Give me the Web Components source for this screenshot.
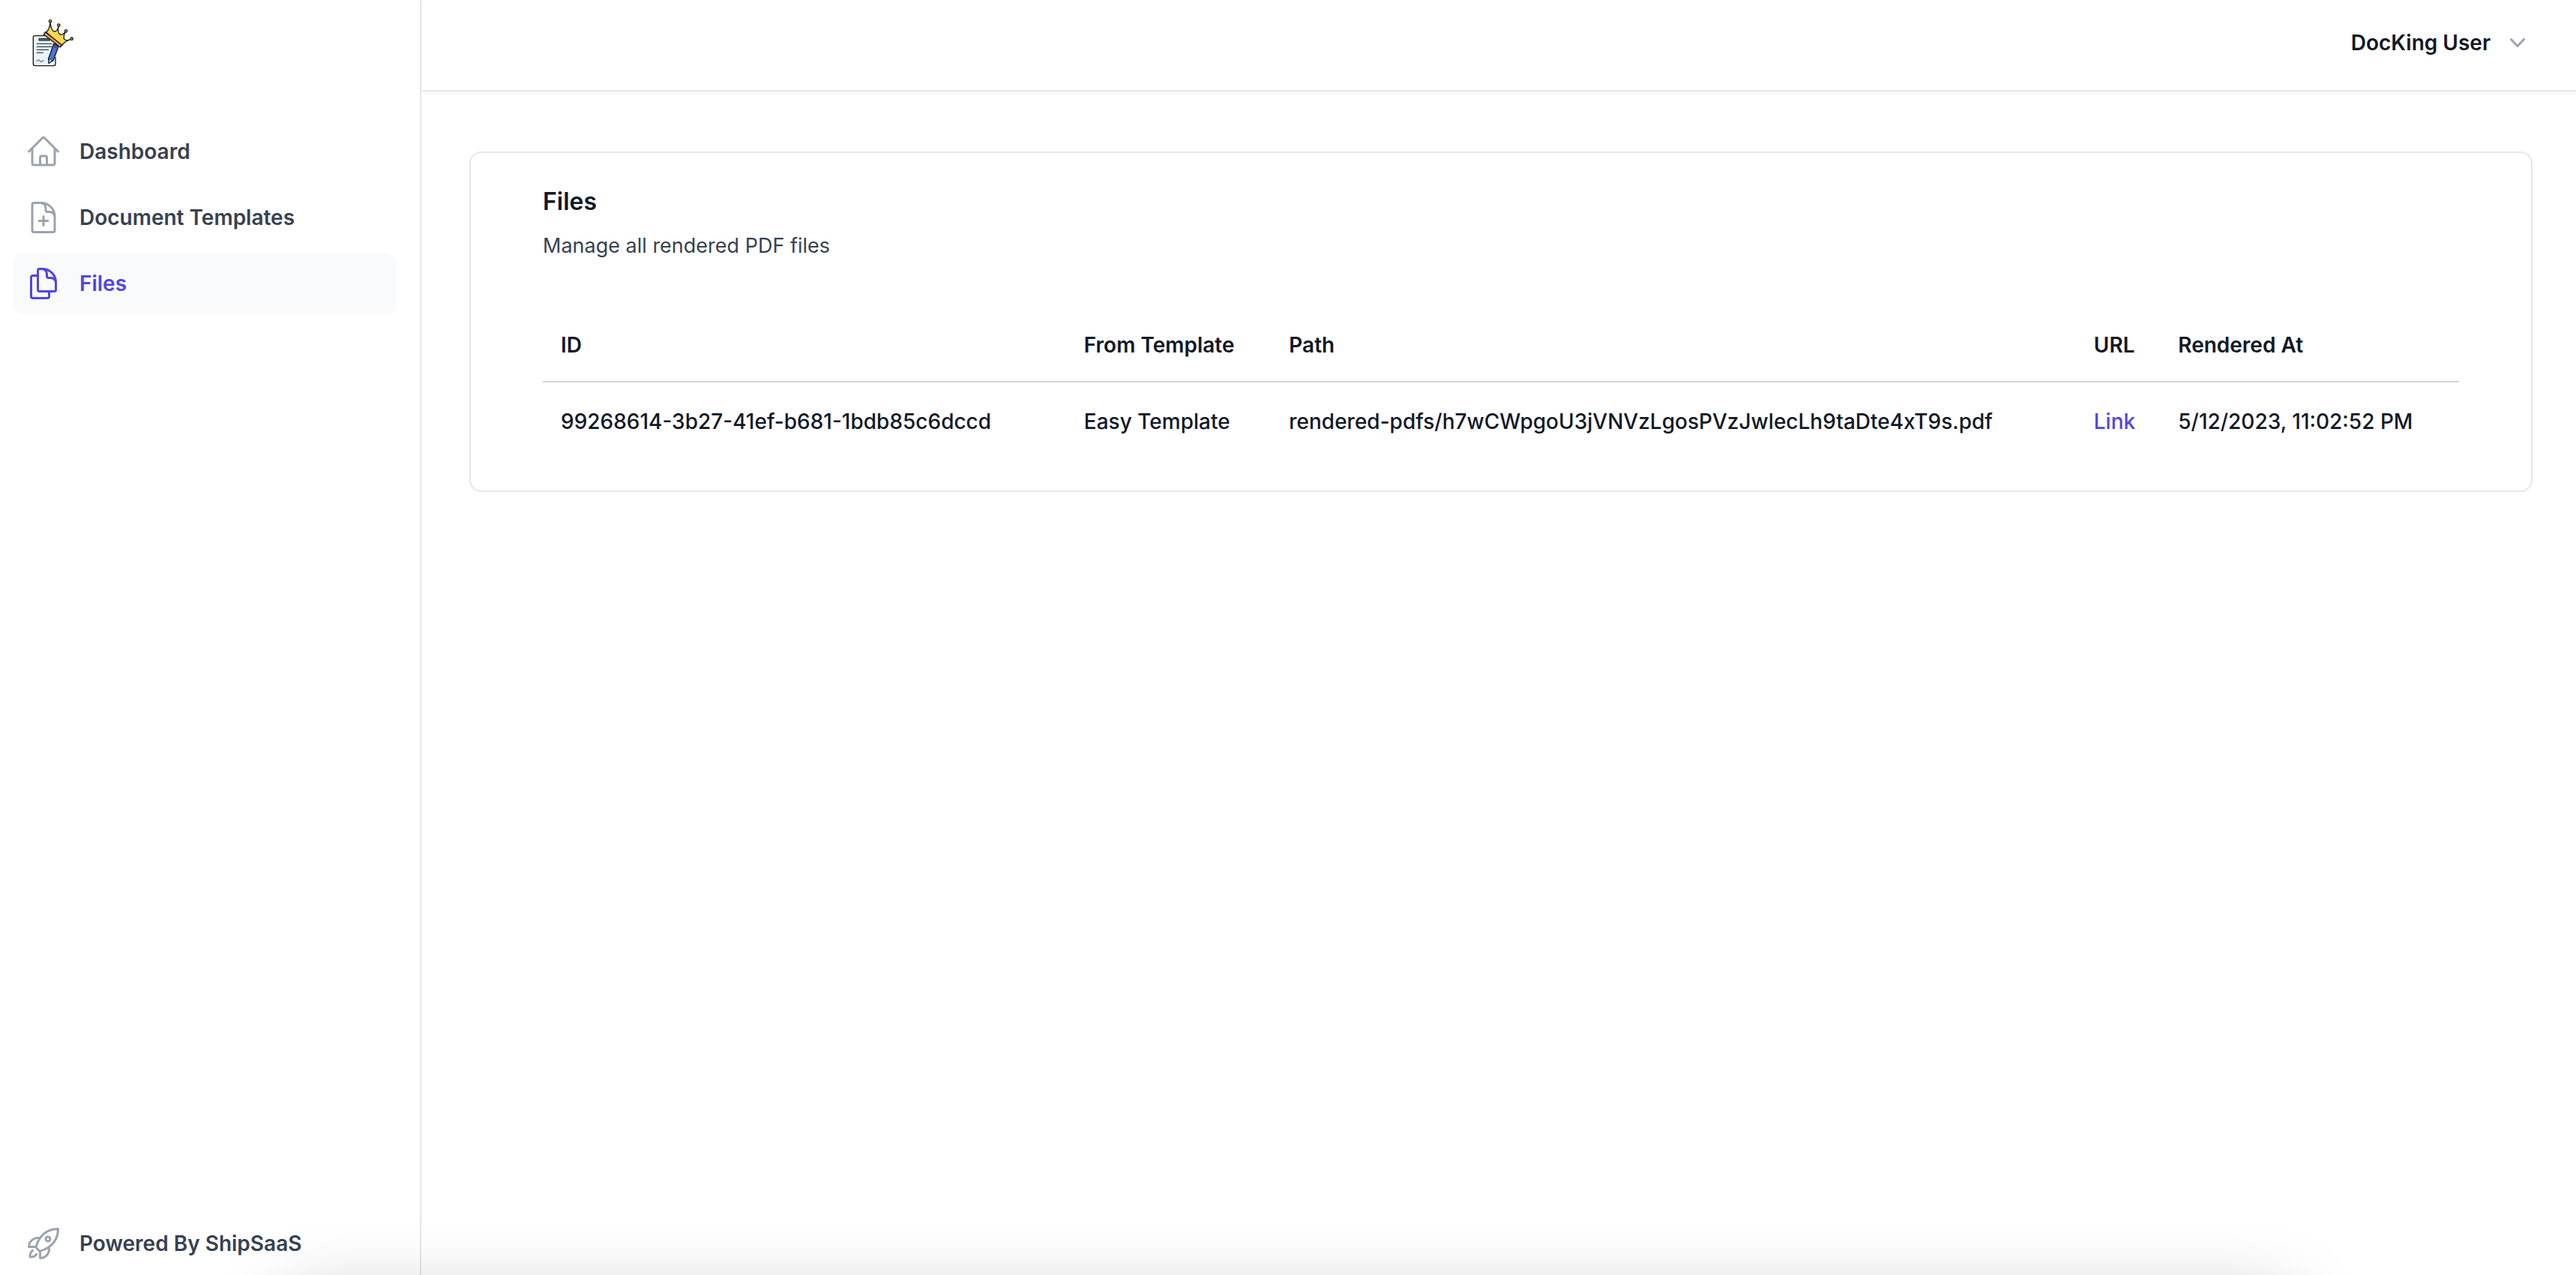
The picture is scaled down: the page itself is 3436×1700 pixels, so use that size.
<!DOCTYPE html>
<html lang="en">
<head>
<meta charset="utf-8">
<meta name="viewport" content="width=device-width, initial-scale=1">
<title>DocKing - Files</title>
<style>
  :root {
    --ink: #111827;
    --text: #374151;
    --muted: #9ca3af;
    --line: #e5e7eb;
    --line-strong: #d1d5db;
    --accent: #4f46e5;
    --hover: #f9fafb;
  }
  body {
    margin: 0;
    background: #fff;
    color: var(--ink);
    font-family: Inter, "Liberation Sans", sans-serif;
    font-size: 28px;
    line-height: 40px;
  }
</style>
</head>
<body>
<dk-app>
  <dk-sidebar slot="sidebar">
    <dk-logo slot="logo"></dk-logo>
    <dk-nav-item icon="home" href="#dashboard">Dashboard</dk-nav-item>
    <dk-nav-item icon="document-plus" href="#templates">Document Templates</dk-nav-item>
    <dk-nav-item icon="document-duplicate" href="#files" active>Files</dk-nav-item>
    <dk-nav-item slot="footer" icon="rocket" href="#shipsaas">Powered By ShipSaaS</dk-nav-item>
  </dk-sidebar>
  <dk-topbar slot="topbar">
    <dk-user-menu>DocKing User</dk-user-menu>
  </dk-topbar>
  <dk-card>
    <span slot="title">Files</span>
    <span slot="description">Manage all rendered PDF files</span>
    <dk-files-table></dk-files-table>
  </dk-card>
</dk-app>

<script>
const define = (name, html, setup) => {
  const template = document.createElement('template');
  template.innerHTML = html;
  customElements.define(name, class extends HTMLElement {
    constructor() {
      super();
      this.attachShadow({ mode: 'open' }).append(template.content.cloneNode(true));
    }
    connectedCallback() {
      if (setup) setup(this, this.shadowRoot);
    }
  });
};

const ICONS = {
  'home': 'M2.25 12l8.954-8.955c.44-.439 1.152-.439 1.591 0L21.75 12M4.5 9.75v10.125c0 .621.504 1.125 1.125 1.125H9.75v-4.875c0-.621.504-1.125 1.125-1.125h2.25c.621 0 1.125.504 1.125 1.125V21h4.125c.621 0 1.125-.504 1.125-1.125V9.75M8.25 21h8.25',
  'document-plus': 'M19.5 14.25v-2.625a3.375 3.375 0 00-3.375-3.375h-1.5A1.125 1.125 0 0113.5 7.125v-1.5a3.375 3.375 0 00-3.375-3.375H8.25m3.75 9v6m3-3H9m1.5-12H5.625c-.621 0-1.125.504-1.125 1.125v17.25c0 .621.504 1.125 1.125 1.125h12.75c.621 0 1.125-.504 1.125-1.125V11.25a9 9 0 00-9-9z',
  'document-duplicate': 'M15.75 17.25v3.375c0 .621-.504 1.125-1.125 1.125h-9.75a1.125 1.125 0 01-1.125-1.125V7.875c0-.621.504-1.125 1.125-1.125H6.75a9.06 9.06 0 011.5.124m7.5 10.376h3.375c.621 0 1.125-.504 1.125-1.125V11.25c0-4.46-3.243-8.161-7.5-8.876a9.06 9.06 0 00-1.5-.124H9.375c-.621 0-1.125.504-1.125 1.125v3.5m7.5 10.375H9.375a1.125 1.125 0 01-1.125-1.125v-9.25m12 6.625v-1.875a3.375 3.375 0 00-3.375-3.375h-1.5a1.125 1.125 0 01-1.125-1.125v-1.5a3.375 3.375 0 00-3.375-3.375H9.75',
  'rocket': 'M15.59 14.37a6 6 0 01-5.84 7.38v-4.8m5.84-2.58a14.98 14.98 0 006.16-12.12A14.98 14.98 0 009.631 8.41m5.96 5.96a14.926 14.926 0 01-5.841 2.58m-.119-8.54a6 6 0 00-7.381 5.84h4.8m2.581-5.84a14.927 14.927 0 00-2.58 5.84m2.699 2.7c-.103.021-.207.041-.311.06a15.09 15.09 0 01-2.448-2.448 14.9 14.9 0 01.06-.312m-2.24 2.39a4.493 4.493 0 00-1.757 4.306 4.493 4.493 0 004.306-1.758M16.5 9a1.5 1.5 0 11-3 0 1.5 1.5 0 013 0z'
};

define('dk-app', `
  <style>
    :host { display: grid; grid-template-columns: 562px minmax(0, 1fr); min-height: 100vh; }
    .content { display: flex; flex-direction: column; min-width: 0; }
    main { padding: 80px 58px 80px 64px; }
    /* soft glow rising from below the viewport */
    .glow {
      position: fixed; top: calc(100% + 30px); left: 380px; right: 380px; height: 200px;
      box-shadow: 0 0 100px rgba(0, 0, 0, .22); pointer-events: none;
    }
  </style>
  <slot name="sidebar"></slot>
  <div class="content">
    <slot name="topbar"></slot>
    <main><slot></slot></main>
  </div>
  <div class="glow"></div>
`);

define('dk-sidebar', `
  <style>
    :host {
      display: flex; flex-direction: column; box-sizing: border-box;
      padding: 26px 32px 2px 18px; border-right: 2px solid var(--line);
    }
    .brand { padding: 0 16px; margin-bottom: 72px; }
    nav { flex: 1; display: flex; flex-direction: column; gap: 8px; }
    .footer { margin-top: auto; }
  </style>
  <div class="brand"><slot name="logo"></slot></div>
  <nav aria-label="Main">
    <slot></slot>
    <div class="footer"><slot name="footer"></slot></div>
  </nav>
`);

define('dk-logo', `
  <style>
    :host { display: block; width: 64px; height: 64px; }
    svg { display: block; width: 100%; height: 100%; }
  </style>
  <svg viewBox="42 48 192 192" role="img" aria-label="DocKing" stroke-linecap="round" stroke-linejoin="round">
    <rect x="73" y="113" width="89" height="120" rx="7" fill="#e9f4fd" stroke="#16191f" stroke-width="4"/>
    <path d="M162 178v20" stroke="#fff" stroke-width="6" stroke-linecap="butt"/>
    <rect x="97" y="124" width="42" height="8" fill="#57707f" stroke="#16191f" stroke-width="3"/>
    <path d="M88 145h58M88 157h58M88 169h46M88 181h24" fill="none" stroke="#3b434c" stroke-width="4"/>
    <path d="M87 215c6-8 10-6 13-1s7 2 14-2" fill="none" stroke="#16191f" stroke-width="3"/>
    <path d="M155 145l20 9-22 58-18 11-1-18z" fill="#4a74cf" stroke="#16191f" stroke-width="4"/>
    <path d="M157 148l17 8-4 9-17-7z" fill="#2f57ab" stroke="none"/>
    <path d="M136 207l15 5-15 10z" fill="#9fdcf0" stroke="#16191f" stroke-width="2"/>
    <path d="M125 99c10-9 14-21 16-38 3 22 9 35 18 35 7 0 12-9 15-20-3 18-1 30 8 32 7 1 14-3 19-10-6 14-8 27-1 31 6 3 14 2 22-1-14 4-26 12-35 25z" fill="#fbd651" stroke="#16191f" stroke-width="4"/>
    <path d="M121 98l66 51-6 10-66-51z" fill="#f2993c" stroke="#16191f" stroke-width="4"/>
    <g fill="#f7cf3f" stroke="#16191f" stroke-width="4">
      <circle cx="141" cy="55" r="5"/><circle cx="175" cy="71" r="5"/>
      <circle cx="204" cy="94" r="5"/><circle cx="227" cy="125" r="5"/>
    </g>
  </svg>
`);

define('dk-nav-item', `
  <style>
    :host { display: block; }
    a {
      display: flex; gap: 24px; padding: 16px; border-radius: 12px;
      color: var(--text); font-weight: 600; line-height: 48px; text-decoration: none;
    }
    svg { flex: none; width: 48px; height: 48px; color: var(--muted); }
    a:hover, :host([active]) a { background: var(--hover); color: var(--accent); }
    a:hover svg, :host([active]) svg { color: var(--accent); }
  </style>
  <a><svg viewBox="0 0 24 24" fill="none" stroke="currentColor" stroke-width="1.5" stroke-linecap="round" stroke-linejoin="round" aria-hidden="true"><path/></svg><slot></slot></a>
`, (host, root) => {
  root.querySelector('a').href = host.getAttribute('href');
  root.querySelector('path').setAttribute('d', ICONS[host.getAttribute('icon')]);
  if (host.hasAttribute('active')) root.querySelector('a').setAttribute('aria-current', 'page');
});

define('dk-topbar', `
  <style>
    :host { display: block; border-bottom: 2px solid var(--line); box-shadow: 0 2px 4px rgba(0, 0, 0, .05); }
    header { display: flex; justify-content: flex-end; padding: 37px 58px 43px 64px; }
  </style>
  <header><slot></slot></header>
`);

define('dk-user-menu', `
  <style>
    :host { display: block; }
    button {
      display: flex; align-items: center; gap: 16px; margin: 0; padding: 0; border: 0;
      background: none; color: var(--ink); font: inherit; font-weight: 600; cursor: pointer;
    }
    svg { width: 40px; height: 40px; color: var(--muted); }
  </style>
  <button type="button" aria-haspopup="menu"><slot></slot><svg viewBox="0 0 20 20" fill="currentColor" aria-hidden="true"><path fill-rule="evenodd" clip-rule="evenodd" d="M5.23 7.21a.75.75 0 011.06.02L10 11.168l3.71-3.938a.75.75 0 111.08 1.04l-4.25 4.5a.75.75 0 01-1.08 0l-4.25-4.5a.75.75 0 01.02-1.06z"/></svg></button>
`);

define('dk-card', `
  <style>
    :host { display: block; border: 2px solid var(--line); border-radius: 16px; padding: 41px 96px 40px; }
    h1 { margin: 0; font-size: 32px; line-height: 48px; font-weight: 600; }
    p { margin: 15px 0 64px; color: var(--text); font-size: 27px; }
  </style>
  <section>
    <h1><slot name="title"></slot></h1>
    <p><slot name="description"></slot></p>
    <slot></slot>
  </section>
`);

const FILES = [{
  id: '99268614-3b27-41ef-b681-1bdb85c6dccd',
  template: 'Easy Template',
  path: 'rendered-pdfs/h7wCWpgoU3jVNVzLgosPVzJwlecLh9taDte4xT9s.pdf',
  renderedAt: '5/12/2023, 11:02:52 PM'
}];

define('dk-files-table', `
  <style>
    :host { display: block; }
    table { width: 100%; border-collapse: separate; border-spacing: 0; text-align: left; white-space: nowrap; }
    th { padding: 28px 24px; font-weight: 600; border-bottom: 2px solid var(--line-strong); }
    td { padding: 32px 24px; font-weight: 500; }
    a { color: var(--accent); text-decoration: none; }
    .id { width: 27.3%; }
    .template { width: 10.7%; }
    .path { width: 42%; }
    .url { width: 4.4%; }
    .date { width: 15.6%; }
  </style>
  <table>
    <colgroup><col class="id"><col class="template"><col class="path"><col class="url"><col class="date"></colgroup>
    <thead><tr>
      <th scope="col">ID</th><th scope="col">From Template</th><th scope="col">Path</th><th scope="col">URL</th><th scope="col">Rendered At</th>
    </tr></thead>
    <tbody></tbody>
  </table>
`, (host, root) => {
  root.querySelector('tbody').innerHTML = FILES.map(f =>
    `<tr><td>${f.id}</td><td>${f.template}</td><td>${f.path}</td><td><a href="#${f.path}">Link</a></td><td>${f.renderedAt}</td></tr>`
  ).join('');
});
</script>
</body>
</html>
